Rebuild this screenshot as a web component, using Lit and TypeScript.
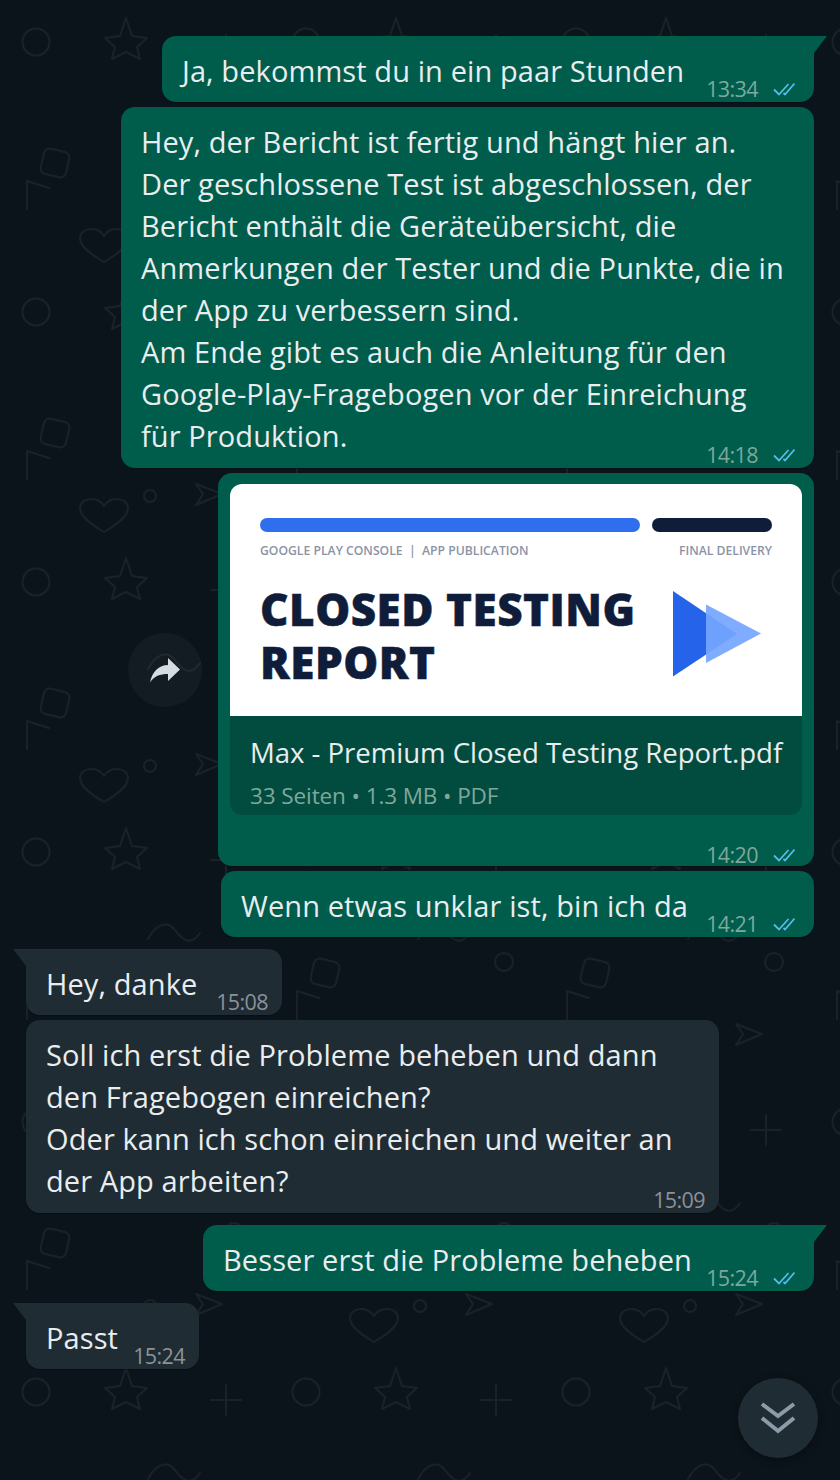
import { LitElement, html, css, svg } from "lit";
import { customElement } from "lit/decorators.js";

type Msg = {
  out: boolean;
  width: number;
  time: string;
  lines?: string[];
  tail?: boolean;
  after?: boolean;
  doc?: boolean;
};

const MESSAGES: Msg[] = [
  { out: true, tail: true, width: 652, time: "13:34", lines: ["Ja, bekommst du in ein paar Stunden"] },
  {
    out: true, width: 693, time: "14:18",
    lines: [
      "Hey, der Bericht ist fertig und hängt hier an.",
      "Der geschlossene Test ist abgeschlossen, der",
      "Bericht enthält die Geräteübersicht, die",
      "Anmerkungen der Tester und die Punkte, die in",
      "der App zu verbessern sind.",
      "Am Ende gibt es auch die Anleitung für den",
      "Google-Play-Fragebogen vor der Einreichung",
      "für Produktion.",
    ],
  },
  { out: true, width: 596, time: "14:20", doc: true },
  { out: true, width: 593, time: "14:21", lines: ["Wenn etwas unklar ist, bin ich da"] },
  { out: false, tail: true, after: true, width: 256, time: "15:08", lines: ["Hey, danke"] },
  {
    out: false, width: 693, time: "15:09",
    lines: [
      "Soll ich erst die Probleme beheben und dann",
      "den Fragebogen einreichen?",
      "Oder kann ich schon einreichen und weiter an",
      "der App arbeiten?",
    ],
  },
  { out: true, tail: true, after: true, width: 611, time: "15:24", lines: ["Besser erst die Probleme beheben"] },
  { out: false, tail: true, after: true, width: 173, time: "15:24", lines: ["Passt"] },
];

const TILE = svg`
  <circle cx="36" cy="42" r="13.5"/>
  <path d="M126 18 L132 36 L147 38 L137 47 L140 59 L126 52 L112 59 L115 47 L105 38 L120 36 Z"/>
  <path d="M211 50 H241 M226 35 V65"/>
  <path d="M148 129 C156 114 167 110 175 120 C183 131 191 136 200 123"/>
  <rect x="42" y="150" width="26" height="26" rx="6" transform="rotate(13 55 163)"/>
  <path d="M27 209 V181 L49 188"/>
  <path d="M104 262 C92 255 80 247 80 238 C80 228 97 225 104 236 C111 225 128 228 128 238 C128 247 116 255 104 262 Z"/>
  <circle cx="150" cy="226" r="6"/>
  <circle cx="234" cy="152" r="9"/>
  <path d="M196 214 L222 224 L196 235 L203 224 Z"/>
`;

@customElement("app-root")
export class AppRoot extends LitElement {
  static styles = css`
    :host {
      display: block;
      position: relative;
      width: 840px;
      height: 1480px;
      overflow: hidden;
      background: #0b141a;
      font-family: "Open Sans", "Noto Sans", sans-serif;
      color: #e9edef;
    }
    .wall {
      position: absolute;
      inset: 0;
      width: 100%;
      height: 100%;
    }
    .wall g {
      fill: none;
      stroke: #1a2127;
      stroke-width: 2;
      stroke-linejoin: round;
      stroke-linecap: round;
    }
    .list {
      position: relative;
      display: flex;
      flex-direction: column;
      gap: 5px;
      padding: 36px 26px 0;
    }
    .bubble {
      position: relative;
      box-sizing: border-box;
      border-radius: 14px;
      padding: 14px 20px 11px;
      font-size: 29px;
      line-height: 42px;
      letter-spacing: 0.1px;
      white-space: nowrap;
      box-shadow: 0 1px 1px rgba(0, 0, 0, 0.25);
    }
    .bubble.single { padding-bottom: 10px; }
    .bubble.out { align-self: flex-end; background: #005c4b; }
    .bubble.in { align-self: flex-start; background: #202c33; }
    .bubble.after { margin-top: 7px; }
    .bubble.tail.out { border-top-right-radius: 0; }
    .bubble.tail.in { border-top-left-radius: 0; }
    .bubble.tail::after {
      content: "";
      position: absolute;
      top: 0;
      width: 13px;
      height: 17px;
    }
    .bubble.tail.out::after {
      left: 100%;
      background: #005c4b;
      clip-path: polygon(0 0, 100% 0, 0 100%);
    }
    .bubble.tail.in::after {
      right: 100%;
      background: #202c33;
      clip-path: polygon(0 0, 100% 0, 100% 100%);
    }
    .meta {
      position: absolute;
      right: 14px;
      bottom: 0;
      display: flex;
      align-items: center;
      gap: 15px;
      font-size: 21.5px;
      line-height: 26px;
      letter-spacing: -0.6px;
      color: #8a9298;
    }
    .out .meta { right: 19px; color: #7ea89d; }
    .doc .meta { bottom: -2px; }
    .ticks {
      width: 22px;
      height: 14px;
      fill: none;
      stroke: #53bdeb;
      stroke-width: 1.8;
    }
    .doc { padding: 11px 12px 51px; }
    .card {
      border-radius: 12px;
      overflow: hidden;
      background: #024c3f;
    }
    .cover {
      box-sizing: border-box;
      height: 232px;
      padding: 34px 30px 0;
      background: #fff;
      display: flex;
      flex-direction: column;
    }
    .bars { display: flex; gap: 12px; }
    .bars span { height: 14px; border-radius: 7px; }
    .bar-a { flex: 1; background: #2f6fed; }
    .bar-b { width: 120px; background: #0f1d3a; }
    .labels {
      display: flex;
      justify-content: space-between;
      margin-top: 11px;
      font-size: 12.2px;
      line-height: 16px;
      font-weight: 600;
      letter-spacing: 0;
      color: #8b93a7;
    }
    .cover-body { display: flex; justify-content: space-between; margin-top: 24px; }
    .title {
      font-size: 44px;
      line-height: 53px;
      font-weight: 800;
      letter-spacing: 0.5px;
      -webkit-text-stroke: 0.5px #0f1d3a;
      color: #0f1d3a;
    }
    .play { width: 88px; height: 86px; margin: 8px 11px 0 0; flex: none; }
    .file { padding: 16px 20px 0; height: 99px; box-sizing: border-box; }
    .name { line-height: 40px; font-size: 27.6px; letter-spacing: -0.05px; }
    .sub { font-size: 22.5px; line-height: 30px; margin-top: 9px; letter-spacing: -0.1px; color: #7ea89d; }
    .forward {
      position: absolute;
      right: 100%;
      top: 160px;
      margin-right: 16px;
      width: 74px;
      height: 74px;
      border-radius: 50%;
      background: rgba(255, 255, 255, 0.035);
      display: flex;
      align-items: center;
      justify-content: center;
    }
    .forward svg { width: 30px; height: 25px; fill: #d5dce2; }
    .down {
      position: absolute;
      left: 738px;
      top: 1378px;
      width: 80px;
      height: 80px;
      border-radius: 50%;
      background: #202c33;
      box-shadow: 0 2px 8px rgba(0, 0, 0, 0.3);
      display: flex;
      align-items: center;
      justify-content: center;
    }
    .down svg { width: 40px; height: 34px; fill: none; stroke: #8b9ca8; stroke-width: 4; }
  `;

  private renderMeta(m: Msg) {
    return html`<div class="meta">
      <span>${m.time}</span>
      ${m.out
        ? html`<svg class="ticks" viewBox="0 0 22 14"><path d="M1 7.5 L6 12.5 L15.5 2"/><path d="M10.5 11 L12 12.5 L21.5 1.5"/></svg>`
        : ""}
    </div>`;
  }

  private renderDoc() {
    return html`
      <div class="forward">
        <svg viewBox="0 0 30 25"><path d="M18 0 L30 11.5 L18 23 V16 C10 16 4 18 0 24.5 C2 14 9 7 18 7 Z"/></svg>
      </div>
      <div class="card">
        <div class="cover">
          <div class="bars"><span class="bar-a"></span><span class="bar-b"></span></div>
          <div class="labels"><span>GOOGLE PLAY CONSOLE &nbsp;|&nbsp; APP PUBLICATION</span><span>FINAL DELIVERY</span></div>
          <div class="cover-body">
            <div class="title">CLOSED TESTING<br />REPORT</div>
            <svg class="play" viewBox="0 0 88 86">
              <path d="M0 0 L64 43 L0 85.5 Z" fill="#2563eb"/>
              <path d="M33 13.5 L88 42.5 L33 72 Z" fill="#74a5ff" opacity="0.92"/>
            </svg>
          </div>
        </div>
        <div class="file">
          <div class="name">Max - Premium Closed Testing Report.pdf</div>
          <div class="sub">33 Seiten • 1.3 MB • PDF</div>
        </div>
      </div>`;
  }

  render() {
    return html`
      <svg class="wall" aria-hidden="true">
        <defs><pattern id="tile" width="270" height="270" patternUnits="userSpaceOnUse"><g>${TILE}</g></pattern></defs>
        <rect width="100%" height="100%" fill="url(#tile)"/>
      </svg>
      <div class="list">
        ${MESSAGES.map((m) => {
          const cls = ["bubble", m.out ? "out" : "in", m.tail ? "tail" : "", m.after ? "after" : "", m.doc ? "doc" : "", m.lines?.length === 1 ? "single" : ""].join(" ");
          return html`<div class=${cls} style="width:${m.width}px">
            ${m.doc ? this.renderDoc() : m.lines!.map((l) => html`<div>${l}</div>`)}
            ${this.renderMeta(m)}
          </div>`;
        })}
      </div>
      <div class="down">
        <svg viewBox="0 0 40 34"><path d="M4 3 L20 15 L36 3"/><path d="M4 17 L20 30 L36 17"/></svg>
      </div>
    `;
  }
}
